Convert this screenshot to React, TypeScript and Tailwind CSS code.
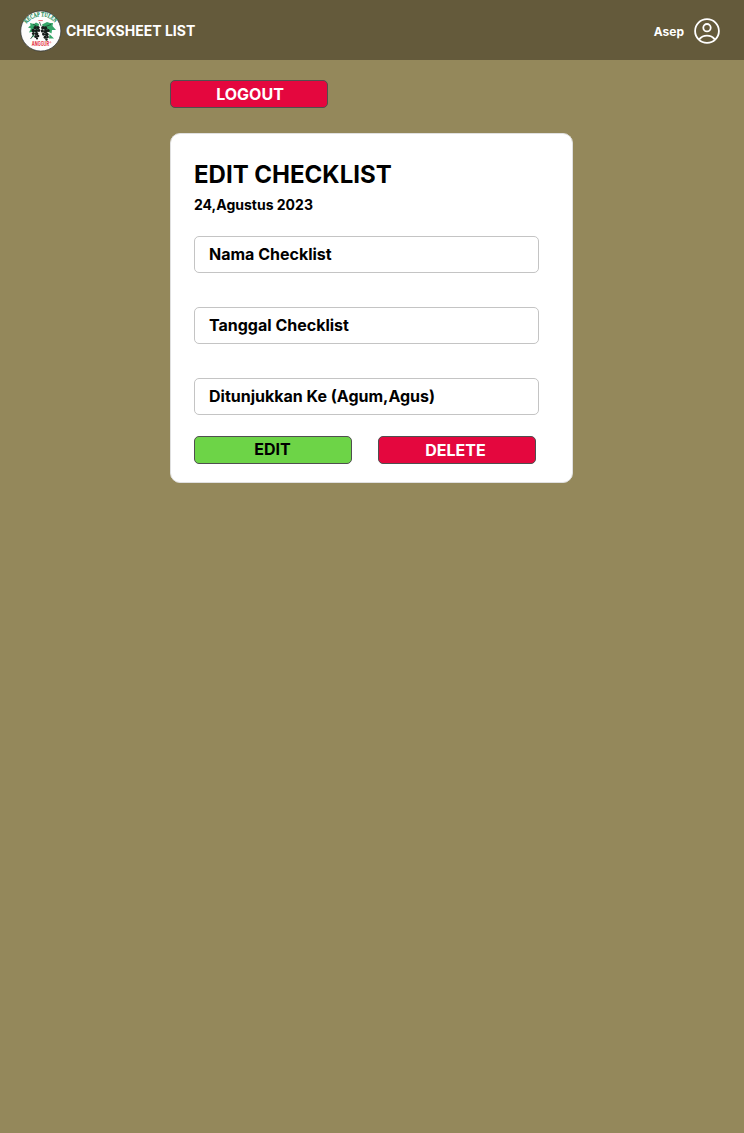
import React from "react";

function Logo() {
  return (
    <svg className="h-[42px] w-[42px] shrink-0" viewBox="0 0 42 42" role="img" aria-label="Kecap Tulen Anggur">
      <defs>
        <path id="logo-arc" d="M6.6 13.8 A18 18 0 0 1 35.2 13.2" />
      </defs>
      <circle cx="20.8" cy="21" r="20.1" fill="#fdfdfd" stroke="#34383a" strokeWidth="0.8" />
      <text fontFamily="'Liberation Serif', serif" fontSize="6.4" fontWeight="700" fill="#1f8f5c" stroke="#1f8f5c" strokeWidth="0.2">
        <textPath href="#logo-arc" startOffset="0" textLength="32" lengthAdjust="spacingAndGlyphs">KECAP TULEN</textPath>
      </text>
      <path d="M18.400 10.600h4.400" stroke="#e05a64" strokeWidth="0.9" />
      <g fill="#35a568">
        <path d="M19 14l-3-1.500-2 1.500-4-1 .5 2.500-2.500 2 3 1-2 4 5-1 2 3 2-4z" />
        <path d="M22 14.500l5-2.500 3 1 3 0-.5 3 3.500 4-4 0-.5 3.500-3.500-2-3 2-1-4z" />
        <path d="M13.500 24l1 2-3.500 2zM29.500 24l4.500 4.500-5 0z" />
      </g>
      <path d="M19.500 12l1.500 4M13 14l5 3M31 14.500l-8 3M10.500 29l3-4" stroke="#17362a" strokeWidth="0.7" fill="none" />
      <g fill="#171c1b">
        <circle cx="15.200" cy="17.800" r="1.700" /><circle cx="18" cy="17.600" r="1.700" />
        <circle cx="13.200" cy="20.500" r="1.700" /><circle cx="16.200" cy="20.800" r="1.900" /><circle cx="18.900" cy="20.500" r="1.400" />
        <circle cx="13.400" cy="23.400" r="1.500" /><circle cx="16.600" cy="23.700" r="1.800" />
        <circle cx="15.700" cy="26.400" r="1.500" /><circle cx="18" cy="26" r="1.300" /><circle cx="17" cy="28.400" r="1.100" />
        <circle cx="22.800" cy="17.700" r="1.700" /><circle cx="25.500" cy="18.300" r="1.800" />
        <circle cx="22.400" cy="20.900" r="1.600" /><circle cx="25.500" cy="21.400" r="1.900" />
        <circle cx="28.200" cy="20.500" r="1.500" /><circle cx="23.600" cy="24.100" r="1.600" />
        <circle cx="26.700" cy="24.300" r="1.900" /><circle cx="25.200" cy="27.200" r="1.600" /><circle cx="27.600" cy="27" r="1.200" />
        <circle cx="26.500" cy="29.500" r="1.200" />
      </g>
      <g fill="#a7b2ad">
        <circle cx="15" cy="19.500" r="0.500" /><circle cx="15" cy="22.500" r="0.500" /><circle cx="17.400" cy="22" r="0.450" />
        <circle cx="24" cy="20" r="0.500" /><circle cx="24.800" cy="23.200" r="0.500" /><circle cx="27.200" cy="22.400" r="0.450" />
      </g>
      <text x="11.800" y="35.900" textLength="17.200" lengthAdjust="spacingAndGlyphs" fontFamily="Inter, sans-serif" fontSize="5.600" fontWeight="700" fill="#e32636">ANGGUR</text>
      <circle cx="30.300" cy="32.300" r="0.600" fill="none" stroke="#e32636" strokeWidth="0.400" />
    </svg>
  );
}

function ProfileIcon() {
  return (
    <svg className="h-[26px] w-[26px]" viewBox="0 0 26 26" fill="none" stroke="white" strokeWidth="1.8">
      <circle cx="13" cy="13" r="11.9" />
      <circle cx="13" cy="9.7" r="3.7" />
      <path d="M5.200 21.400C7.200 18.800 9.800 17.600 13 17.600s5.800 1.200 7.800 3.800" />
    </svg>
  );
}

function Field({ label }: { label: string }) {
  return (
    <div className="flex h-[37px] w-[345px] items-center rounded-[5px] border border-[#c4c4c4] bg-white pb-0.5 pl-[14px] text-base leading-5 font-bold">
      {label}
    </div>
  );
}

export default function App() {
  const button = "flex h-7 w-[158px] items-center justify-center rounded-[5px] border border-[#4f4f4f] text-base leading-5 font-bold";
  return (
    <div className="min-h-screen bg-[#94885b] font-['Inter',sans-serif] text-black">
      <header className="flex h-[60px] items-center bg-[#645a3b] pt-0.5 pr-6 pl-5 text-white">
        <Logo />
        <span className="ml-1 text-sm leading-5 font-bold">CHECKSHEET LIST</span>
        <span className="mr-[10px] ml-auto pt-0.5 text-xs leading-4 font-bold">Asep</span>
        <ProfileIcon />
      </header>
      <main className="ml-[170px] w-[403px] pt-5">
        <button className={`${button} bg-[#e4073e] pl-0.5 text-white`}>LOGOUT</button>
        <section className="mt-[25px] h-[350px] rounded-[10px] border border-[#e0e0e0] bg-white px-[23px] pt-[26px]">
          <h1 className="text-2xl leading-[30px] font-bold">EDIT CHECKLIST</h1>
          <p className="mt-[6px] text-sm leading-[18px] font-bold">24,Agustus 2023</p>
          <div className="mt-[22px] flex flex-col gap-[34px]">
            <Field label="Nama Checklist" />
            <Field label="Tanggal Checklist" />
            <Field label="Ditunjukkan Ke (Agum,Agus)" />
          </div>
          <div className="mt-[21px] flex gap-[26px]">
            <button className={`${button} bg-[#6dd447] pr-px pb-0.5`}>EDIT</button>
            <button className={`${button} bg-[#e4073e] pr-[3px] text-white`}>DELETE</button>
          </div>
        </section>
      </main>
    </div>
  );
}
